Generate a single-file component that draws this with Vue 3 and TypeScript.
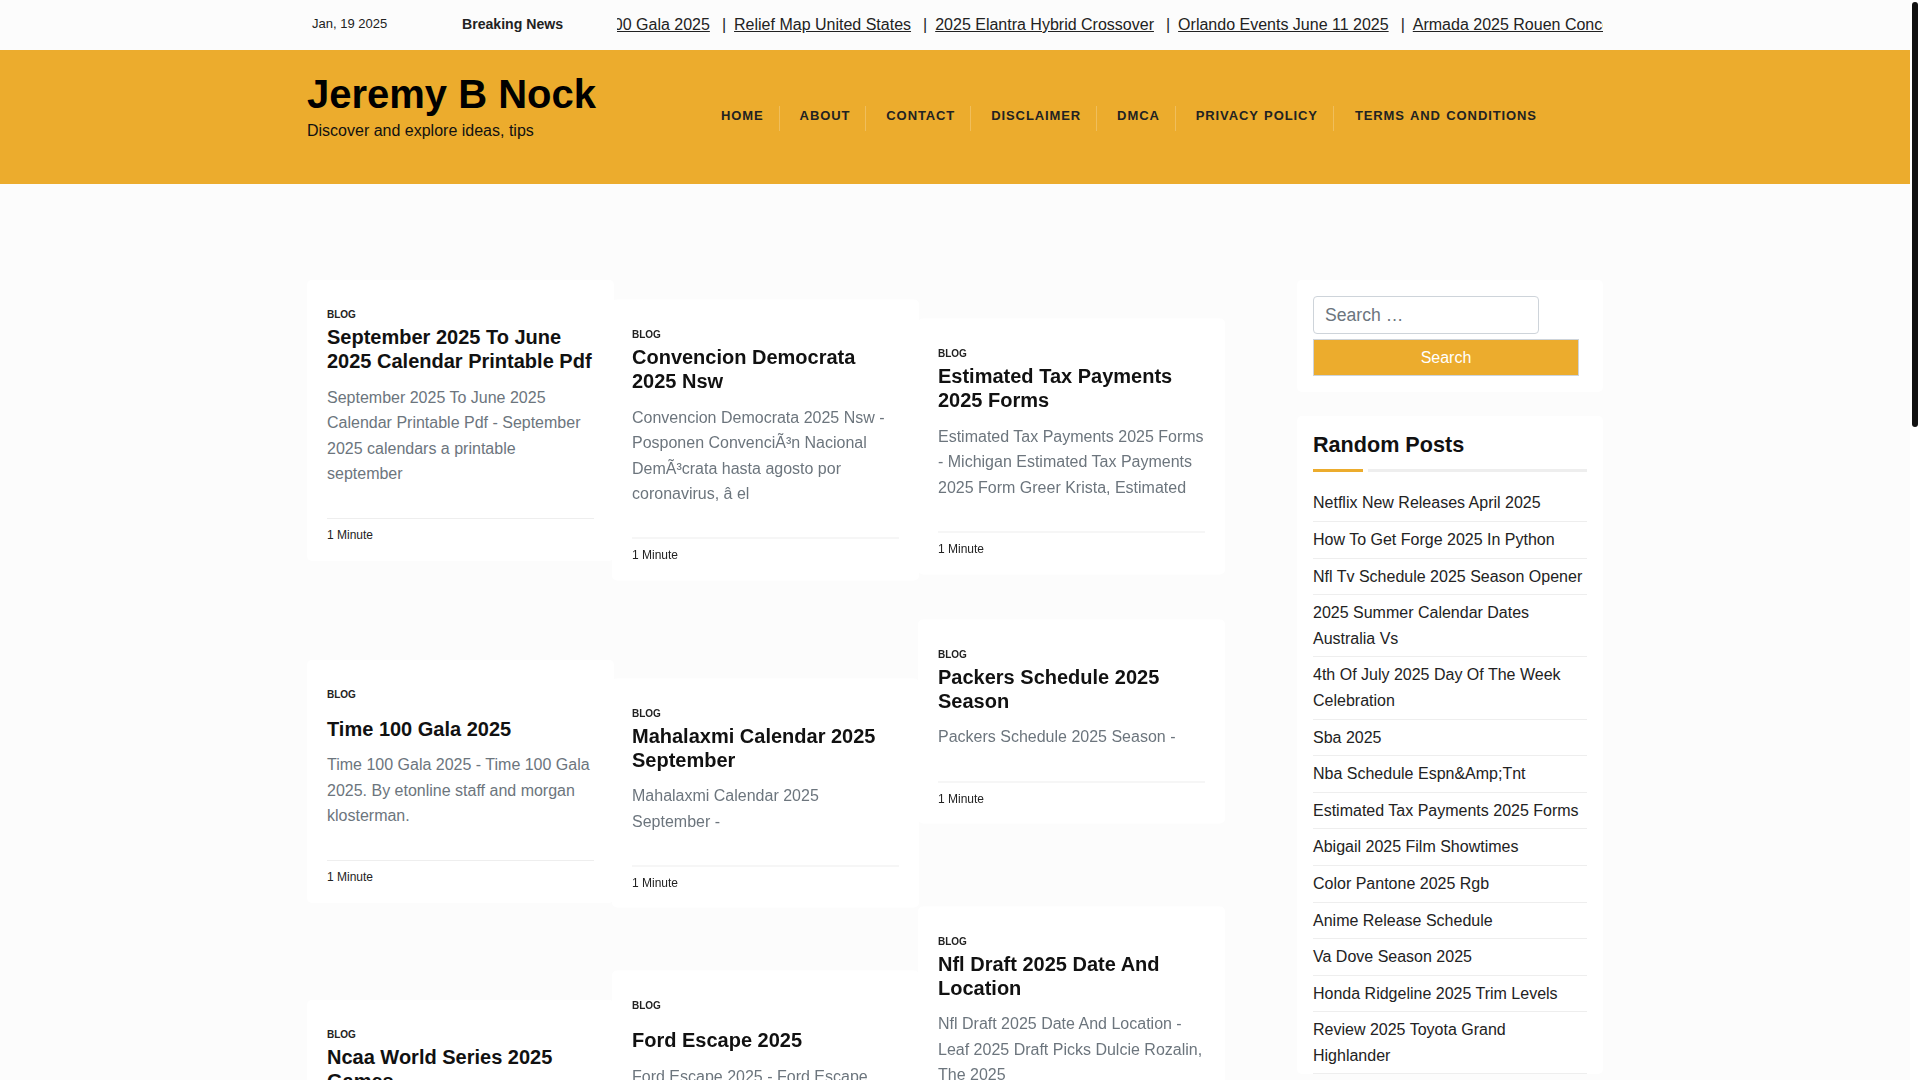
<script setup lang="ts">
interface Post {
  title: string;
  excerpt: string;
  gap: number;
  single?: boolean;
}

const nav: string[] = ['Home', 'About', 'Contact', 'Disclaimer', 'DMCA', 'Privacy Policy', 'Terms and Conditions'];

const ticker: string[] = [
  'Time 100 Gala 2025',
  'Relief Map United States',
  '2025 Elantra Hybrid Crossover',
  'Orlando Events June 11 2025',
  'Armada 2025 Rouen Concert',
];

const columns: Post[][] = [
  [
    {
      title: 'September 2025 To June 2025 Calendar Printable Pdf',
      excerpt: 'September 2025 To June 2025 Calendar Printable Pdf - September 2025 calendars a printable september',
      gap: 0,
    },
    {
      title: 'Time 100 Gala 2025',
      excerpt: 'Time 100 Gala 2025 - Time 100 Gala 2025. By etonline staff and morgan klosterman.',
      gap: 98.6,
      single: true,
    },
    {
      title: 'Ncaa World Series 2025 Games',
      excerpt: 'Ncaa World Series 2025 Games -',
      gap: 97,
    },
  ],
  [
    {
      title: 'Convencion Democrata 2025 Nsw',
      excerpt: 'Convencion Democrata 2025 Nsw - Posponen ConvenciÃ³n Nacional DemÃ³crata hasta agosto por coronavirus, â el',
      gap: 19,
    },
    {
      title: 'Mahalaxmi Calendar 2025 September',
      excerpt: 'Mahalaxmi Calendar 2025 September -',
      gap: 97.6,
    },
    {
      title: 'Ford Escape 2025',
      excerpt: 'Ford Escape 2025 - Ford Escape 2025.',
      gap: 62.9,
      single: true,
    },
  ],
  [
    {
      title: 'Estimated Tax Payments 2025 Forms',
      excerpt: 'Estimated Tax Payments 2025 Forms - Michigan Estimated Tax Payments 2025 Form Greer Krista, Estimated',
      gap: 38.4,
    },
    {
      title: 'Packers Schedule 2025 Season',
      excerpt: 'Packers Schedule 2025 Season -',
      gap: 45.2,
    },
    {
      title: 'Nfl Draft 2025 Date And Location',
      excerpt: 'Nfl Draft 2025 Date And Location - Leaf 2025 Draft Picks Dulcie Rozalin, The 2025',
      gap: 82.4,
    },
  ],
];

const randomPosts: string[] = [
  'Netflix New Releases April 2025',
  'How To Get Forge 2025 In Python',
  'Nfl Tv Schedule 2025 Season Opener',
  '2025 Summer Calendar Dates Australia Vs',
  '4th Of July 2025 Day Of The Week Celebration',
  'Sba 2025',
  'Nba Schedule Espn&Amp;Tnt',
  'Estimated Tax Payments 2025 Forms',
  'Abigail 2025 Film Showtimes',
  'Color Pantone 2025 Rgb',
  'Anime Release Schedule',
  'Va Dove Season 2025',
  'Honda Ridgeline 2025 Trim Levels',
  'Review 2025 Toyota Grand Highlander',
];
</script>

<template>
  <div class="page">
    <div class="topbar">
      <div class="container topbar-inner">
        <span class="date">Jan, 19 2025</span>
        <strong class="breaking">Breaking News</strong>
        <div class="ticker">
          <div class="ticker-track">
            <template v-for="(item, i) in ticker" :key="item">
              <span v-if="i > 0" class="sep">|</span>
              <a class="ticker-link" href="#">{{ item }}</a>
            </template>
          </div>
        </div>
      </div>
    </div>

    <header class="masthead">
      <div class="container masthead-inner">
        <div class="brand">
          <h1 class="site-title">Jeremy B Nock</h1>
          <p class="tagline">Discover and explore ideas, tips</p>
        </div>
        <nav class="nav">
          <a v-for="item in nav" :key="item" class="nav-item" href="#">{{ item }}</a>
        </nav>
      </div>
    </header>

    <main class="container content">
      <section class="posts">
        <div v-for="(col, c) in columns" :key="c" class="post-col">
          <article
            v-for="post in col"
            :key="post.title"
            class="card"
            :style="{ marginTop: post.gap + 'px' }"
          >
            <div class="cat">Blog</div>
            <h2 class="card-title" :class="{ single: post.single }">{{ post.title }}</h2>
            <p class="excerpt">{{ post.excerpt }}</p>
            <div class="meta">1 Minute</div>
          </article>
        </div>
      </section>

      <aside class="sidebar">
        <div class="widget search-widget">
          <input class="search-input" type="text" placeholder="Search …" />
          <button class="search-btn" type="button">Search</button>
        </div>
        <div class="widget list-widget">
          <h3 class="widget-title">Random Posts</h3>
          <div class="rule"><span class="rule-accent"></span><span class="rule-rest"></span></div>
          <ul class="post-list">
            <li v-for="item in randomPosts" :key="item">{{ item }}</li>
          </ul>
        </div>
      </aside>
    </main>

    <div class="scrollbar"><div class="scrollbar-thumb"></div></div>
  </div>
</template>

<style>
html {
  background: #fff;
}
body {
  margin: 0;
  background: #fff;
}
</style>

<style scoped>
.page {
  width: 1910px;
  padding-bottom: 40px;
  background: #fcfcfc;
  font-family: "Liberation Sans", Arial, sans-serif;
  font-size: 16px;
  color: #222;
}
.container {
  width: 1296px;
  margin: 0 auto;
}
.scrollbar {
  position: fixed;
  top: 0;
  right: 0;
  width: 10px;
  height: 100vh;
  background: #fff;
}
.scrollbar-thumb {
  width: 6px;
  height: 425px;
  margin: 2px 2px 0;
  border-radius: 3px;
  background: #111;
}
.topbar {
  height: 50px;
}
.topbar-inner {
  display: flex;
  align-items: center;
  height: 48px;
}
.date {
  width: 150px;
  padding-left: 5px;
  font-size: 13px;
  line-height: 16px;
  flex: none;
}
.breaking {
  width: 155px;
  flex: none;
  font-size: 14.1px;
  line-height: 18px;
  color: #222;
}
.ticker {
  flex: 1;
  min-width: 0;
  margin-top: 2px;
  overflow: hidden;
}
.ticker-track {
  display: flex;
  margin-left: -51.5px;
  white-space: nowrap;
  line-height: 24px;
}
.ticker-link {
  color: #222;
  text-decoration: underline;
}
.sep {
  margin: 0 8px 0 12px;
}
.masthead {
  height: 134px;
  background: #ecac2d;
}
.masthead-inner {
  display: flex;
  align-items: flex-start;
}
.brand {
  width: 394px;
  flex: none;
  padding-top: 20px;
}
.site-title {
  margin: 0;
  font-size: 40px;
  line-height: 48px;
  font-weight: 700;
  color: #000;
  white-space: nowrap;
}
.tagline {
  margin: 0;
  padding-top: 1px;
  font-size: 16px;
  line-height: 24px;
  color: #111;
}
.nav {
  display: flex;
  margin-top: 56px;
}
.nav-item {
  padding: 0 15px 5px 20px;
  border-right: 1px solid rgba(255, 255, 255, 0.22);
  font-size: 13px;
  line-height: 20px;
  font-weight: 700;
  letter-spacing: 0.9px;
  word-spacing: 1px;
  text-transform: uppercase;
  text-decoration: none;
  color: #222;
  white-space: nowrap;
}
.nav-item:last-child {
  padding-left: 21px;
  border-right: 0;
}
.content {
  display: flex;
  justify-content: space-between;
  align-items: flex-start;
  padding-top: 96px;
}
.posts {
  display: flex;
  width: 916px;
  flex: none;
}
.post-col {
  flex: 1;
  min-width: 0;
}
.post-col:nth-child(2) {
  will-change: transform;
  transform: translateY(0.5px);
}
.post-col:nth-child(3) {
  will-change: transform;
  transform: translateY(0.5px);
}
.card {
  margin-right: -1.2px;
  padding: 29px 20px 0;
  background: #fff;
  border-radius: 5px;
}
.cat {
  font-size: 10px;
  line-height: 12px;
  font-weight: 700;
  text-transform: uppercase;
  color: #222;
}
.card-title {
  margin: 4px 0 0;
  font-size: 20px;
  line-height: 24px;
  font-weight: 700;
  color: #111;
}
.card-title.single {
  margin: 16px 0 0;
}
.excerpt {
  margin: 11.5px 0 0;
  font-size: 16px;
  line-height: 25.6px;
  color: #6c757d;
}
.meta {
  margin-top: 31.5px;
  padding: 9px 0 18.6px;
  border-top: 1px solid #eee;
  font-size: 12px;
  line-height: 14px;
  color: #222;
}
.sidebar {
  width: 306px;
  flex: none;
  display: flex;
  flex-direction: column;
  gap: 24px;
}
.widget {
  padding: 16px;
  background: #fff;
  border-radius: 5px;
}
.search-widget {
  display: flex;
  flex-direction: column;
  align-items: flex-start;
  gap: 5px;
}
.search-input {
  box-sizing: border-box;
  width: 226px;
  height: 38px;
  padding: 0 11px;
  border: 1px solid #ced4da;
  border-radius: 4px;
  background: #fff;
  font-family: inherit;
  font-size: 17.6px;
  color: #495057;
}
.search-input::placeholder {
  color: #6c757d;
  opacity: 1;
}
.search-btn {
  box-sizing: border-box;
  width: 266px;
  height: 37px;
  padding: 0;
  border: 1px solid #ced4da;
  background: #ecac2d;
  font-family: inherit;
  font-size: 16px;
  color: #fff;
}
.list-widget {
  padding-bottom: 0;
}
.widget-title {
  margin: 0;
  font-size: 21.6px;
  line-height: 26px;
  font-weight: 700;
  color: #111;
}
.rule {
  display: flex;
  gap: 5px;
  margin-top: 11px;
}
.rule-accent {
  width: 50px;
  height: 3px;
  background: #ecac2d;
}
.rule-rest {
  flex: 1;
  height: 3px;
  background: #eee;
}
.post-list {
  margin: 13.4px 0 0;
  padding: 0;
  list-style: none;
}
.post-list li {
  padding: 5px 0;
  border-bottom: 1px solid #eee;
  line-height: 25.6px;
  color: #222;
}
</style>
